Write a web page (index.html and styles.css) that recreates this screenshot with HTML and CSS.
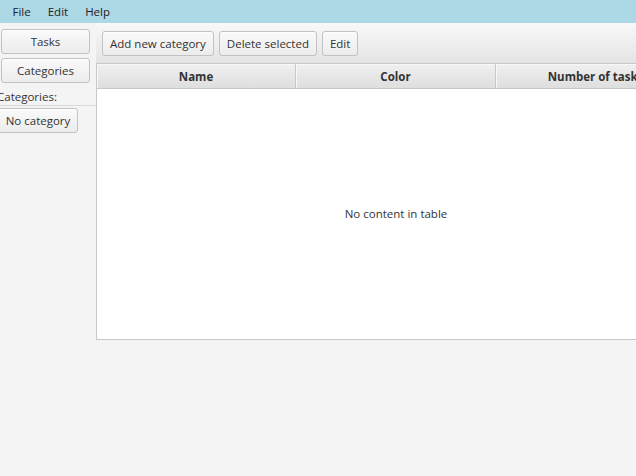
FILE: index.html
```html
<!DOCTYPE html>
<html>
<head>
<meta charset="utf-8">
<link rel="stylesheet" href="styles.css">
</head>
<body>
<div class="app">
  <div class="menubar">
    <span class="menu">File</span>
    <span class="menu">Edit</span>
    <span class="menu">Help</span>
  </div>
  <div class="content">
    <div class="sidebar">
      <div class="nav">
        <button class="btn navbtn">Tasks</button>
        <button class="btn navbtn">Categories</button>
      </div>
      <div class="catlabel">Categories:</div>
      <div class="catlist">
        <button class="btn catbtn">No category</button>
      </div>
    </div>
    <div class="main">
      <div class="toolbar">
        <button class="btn">Add new category</button>
        <button class="btn">Delete selected</button>
        <button class="btn">Edit</button>
      </div>
      <div class="table">
        <div class="thead">
          <div class="th th-first">Name</div>
          <div class="th">Color</div>
          <div class="th">Number of tasks</div>
        </div>
        <div class="tbody">No content in table</div>
      </div>
    </div>
  </div>
</div>
</body>
</html>
```
FILE: styles.css
```css
html, body {
  margin: 0;
  padding: 0;
  background: #f4f4f4;
  overflow: hidden;
}
.app {
  width: 636px;
  height: 476px;
  overflow: hidden;
  font-family: "Open Sans", "Noto Sans", sans-serif;
  font-size: 11.5px;
  color: #333;
}
.menubar {
  height: 23px;
  background: #add8e6;
  display: flex;
  align-items: center;
  padding-left: 4px;
}
.menu {
  padding: 0 8.5px;
  color: #222;
}
.content {
  display: flex;
  align-items: flex-start;
}
.sidebar {
  width: 96px;
  flex: none;
}
.nav {
  display: flex;
  flex-direction: column;
  gap: 4px;
  padding: 6px 0 5px 1px;
}
.btn {
  font: inherit;
  color: #333;
  height: 25px;
  padding: 0 7px;
  border: 1px solid #c2c2c2;
  border-radius: 3px;
  background: linear-gradient(to bottom, #fafafa 0%, #ececec 100%);
  box-shadow: inset 0 1px 0 #ffffff;
  display: flex;
  align-items: center;
  justify-content: center;
  white-space: nowrap;
}
.navbtn {
  width: 89px;
}
.catlabel {
  margin-left: -3px;
  height: 17px;
  line-height: 17px;
  border-bottom: 1px solid #d8d8d8;
}
.catlist {
  padding: 2px 0 0 0;
  margin-left: -2px;
}
.catbtn {
  width: 80px;
}
.main {
  flex: none;
  width: 600px;
}
.toolbar {
  height: 40px;
  box-sizing: border-box;
  background: linear-gradient(to bottom, #f8f8f8 0%, #e4e4e4 100%);
  display: flex;
  align-items: center;
  gap: 5px;
  padding: 1px 6px 0 6px;
}
.table {
  height: 277px;
  box-sizing: border-box;
  border: 1px solid #c8c8c8;
  background: #fff;
  display: flex;
  flex-direction: column;
}
.thead {
  display: flex;
  height: 24px;
  flex: none;
  background: linear-gradient(to bottom, #f0f0f0 0%, #dedede 100%);
  border-bottom: 1px solid #c8c8c8;
}
.th {
  width: 199px;
  flex: none;
  border-right: 1px solid #c8c8c8;
  box-shadow: inset 1px 1px 0 #f8f8f8;
  display: flex;
  align-items: center;
  justify-content: center;
  font-weight: bold;
  color: #333;
}
.th-first {
  width: 198px;
}
.tbody {
  flex: 1;
  display: flex;
  align-items: center;
  justify-content: center;
  color: #333;
  padding-bottom: 2px;
}
```
